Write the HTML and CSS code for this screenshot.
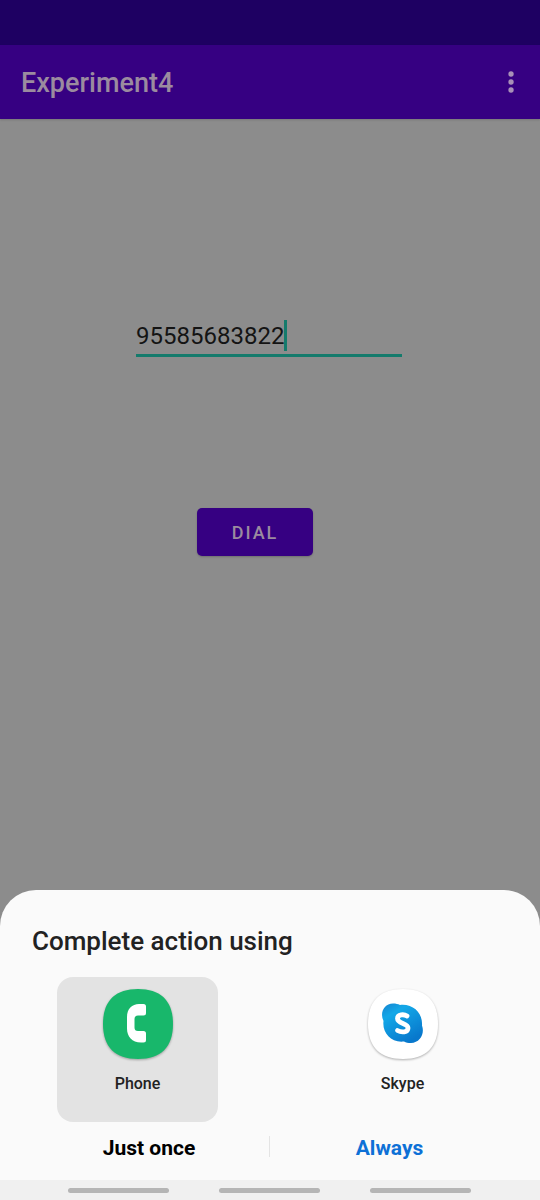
FILE: index.html
```html
<!DOCTYPE html>
<html lang="en">
<head>
<meta charset="utf-8">
<meta name="viewport" content="width=device-width, initial-scale=1">
<title>Experiment4</title>
<link rel="stylesheet" href="styles.css">
</head>
<body>
<div class="status-bar"></div>
<header class="app-bar">
  <h1 class="app-title">Experiment4</h1>
  <button class="menu-button" type="button" aria-label="More options">
    <svg width="8" height="24" viewBox="0 0 8 24" fill="currentColor" aria-hidden="true"><circle cx="4" cy="4" r="2.700"/><circle cx="4" cy="12" r="2.700"/><circle cx="4" cy="20" r="2.700"/></svg>
  </button>
</header>
<main class="content">
  <div class="field">
    <input class="number-input" type="tel" value="95585683822" aria-label="Phone number">
    <span class="caret"></span>
  </div>
  <button class="dial-button" type="button">DIAL</button>
</main>
<section class="sheet" role="dialog" aria-labelledby="sheet-title">
  <h2 class="sheet-title" id="sheet-title">Complete action using</h2>
  <div class="apps">
    <button class="app selected" type="button">
      <svg class="app-icon" viewBox="0 0 70 70" aria-hidden="true">
        <path fill="#18b76b" d="M35 0C58 0 70 12 70 35S58 70 35 70 0 58 0 35 12 0 35 0Z"/>
        <path fill="#fff" d="M36 15h4.500a2.500 2.500 0 0 1 2.500 2.500v6.500a2.500 2.500 0 0 1-2.500 2.500H35a3.500 3.500 0 0 0-3.500 3.500v8.500a3.500 3.500 0 0 0 3.500 3.500H40.500a2.500 2.500 0 0 1 2.500 2.500v6.500a2.500 2.500 0 0 1-2.500 2.500H38c-9 0-14-6-14-14V28c0-8 5-13 12-13Z"/>
      </svg>
      <span>Phone</span>
    </button>
    <button class="app" type="button">
      <svg class="app-icon" viewBox="0 0 70 70" aria-hidden="true">
        <defs>
          <linearGradient id="sky" x1="0" y1="0" x2=".6" y2="1"><stop offset="0" stop-color="#1683cf"/><stop offset=".3" stop-color="#13a8e8"/><stop offset="1" stop-color="#0878cc"/></linearGradient>
        </defs>
        <path fill="#fff" d="M35 0C58 0 70 12 70 35S58 70 35 70 0 58 0 35 12 0 35 0Z"/>
        <path fill="url(#sky)" d="M25 14.500c3 0 5 .5 7 1.500 13-1.500 23 8 22 20.500 3 8-2 17.500-11 17.500-3 0-5-.5-7-1.500C23 54 14 44 15.500 32 11.500 24 16 14.500 25 14.500Z"/>
        <path fill="none" stroke="#fff" stroke-width="4.800" stroke-linecap="round" stroke-linejoin="round" d="M39 27C36 25 29.500 25.200 29.500 29.500c0 5.500 10.500 4.500 10.500 9.500 0 4.500-6.500 4.800-10.500 2.500"/>
      </svg>
      <span>Skype</span>
    </button>
  </div>
  <div class="actions">
    <button class="action" type="button">Just once</button>
    <button class="action always" type="button">Always</button>
  </div>
</section>
<nav class="nav-bar" aria-label="System navigation">
  <span class="nav-hint"></span><span class="nav-hint"></span><span class="nav-hint"></span>
</nav>
</body>
</html>
```
FILE: styles.css
```css
* { box-sizing: border-box; }

body {
  margin: 0;
  min-height: 100vh;
  display: flex;
  flex-direction: column;
  background: #8c8c8c;
  font-family: Roboto, "Liberation Sans", sans-serif;
}

button {
  border: 0;
  padding: 0;
  background: none;
  font-family: inherit;
  color: inherit;
}

.status-bar { height: 45px; background: #1e0062; }

.app-bar {
  height: 74px;
  padding: 0 20px 0 21px;
  display: flex;
  align-items: center;
  justify-content: space-between;
  background: #360082;
  color: #9b8b9f;
  box-shadow: 0 1px 2px rgba(0, 0, 0, .15);
}

.app-title { margin: 0; padding-top: 2px; font-size: 27px; line-height: 32px; font-weight: 500; }

.menu-button { display: flex; padding: 0 5px; color: #a890b8; }

.content {
  flex: 1;
  padding-top: 196px;
  display: flex;
  flex-direction: column;
  align-items: center;
}

.field { position: relative; width: 266px; margin-right: 2px; }

.number-input {
  display: block;
  width: 100%;
  height: 42px;
  padding: 3px 0 0;
  border: 0;
  border-bottom: 3px solid #147b6c;
  outline: 0;
  border-radius: 0;
  background: none;
  color: #141414;
  font: 400 24px/32px Roboto, "Liberation Sans", sans-serif;
}

.caret {
  position: absolute;
  left: 148px;
  top: 5px;
  width: 3px;
  height: 31px;
  background: #147b6c;
}

.dial-button {
  width: 116px;
  height: 48px;
  margin: 151px 30px 0 0;
  border-radius: 5px;
  background: #360082;
  color: #9b8b9f;
  font-size: 18px;
  font-weight: 500;
  letter-spacing: 2px;
  box-shadow: 0 1px 2px rgba(0, 0, 0, .2);
}

.sheet {
  padding-top: 35px;
  border-radius: 36px 36px 0 0;
  background: #fafafa;
}

.sheet-title {
  margin: 0 32px;
  font-size: 26px;
  line-height: 32px;
  font-weight: 500;
  color: #222;
}

.apps {
  display: grid;
  grid-template-columns: 1fr 1fr;
  justify-items: center;
  padding: 20px 5px 0;
}

.app {
  width: 161px;
  height: 145px;
  padding-top: 12px;
  display: flex;
  flex-direction: column;
  align-items: center;
  gap: 15px;
  border-radius: 16px;
  color: #222;
  font-size: 16px;
  line-height: 20px;
  font-weight: 500;
}

.selected { background: #e3e3e3; }

.app-icon {
  width: 70px;
  height: 70px;
  overflow: visible;
  filter: drop-shadow(0 1px 1px rgba(0, 0, 0, .3));
}

.actions {
  display: grid;
  grid-template-columns: 1fr 1fr;
  padding: 14px 31px 23px 29px;
}

.action {
  height: 21px;
  padding-top: 2px;
  color: #000;
  font-size: 21px;
  line-height: 21px;
  font-weight: 700;
}

.always { border-left: 1px solid #e4e4e4; color: #0d70d6; }

.nav-bar {
  height: 20px;
  padding-right: 1px;
  display: flex;
  align-items: center;
  justify-content: center;
  gap: 50px;
  background: #f0f0f0;
}

.nav-hint { width: 101px; height: 5px; border-radius: 3px; background: #b5b5b5; }
```
